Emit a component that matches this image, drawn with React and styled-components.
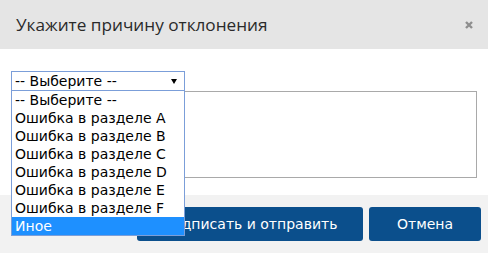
import React from 'react'
import styled, { createGlobalStyle } from 'styled-components';

const GlobalStyle = createGlobalStyle`
    body {
        margin: 0;
        background: #ffffff;
    }
`

const Modal = styled.div`
    width: 488px;
    height: 253px;
    overflow: hidden;
    background: #ffffff;
`

const Header = styled.div`
    height: 49px;
    background: #e5e5e5;
    display: flex;
    align-items: center;
    justify-content: space-between;
    padding: 0 15px 0 16px;
    box-sizing: border-box;
`

const Title = styled.span`
    font-family: 'Open Sans', sans-serif;
    font-size: 17.2px;
    color: #2a2a2a;
`

const Close = styled.svg`
    width: 8px;
    height: 8px;
    color: #8e8e8e;
`

const Body = styled.div`
    padding: 22px 11px 17px;
`

const SelectWrap = styled.div`
    position: relative;
    width: 174px;
`

const SelectBox = styled.div`
    height: 20px;
    box-sizing: border-box;
    border: 1px solid #7b9ed9;
    display: flex;
    align-items: center;
    justify-content: space-between;
    padding: 0 7px 0 3px;
    font-family: 'DejaVu Sans', Verdana, sans-serif;
    font-size: 14px;
    color: #000;
    background: #fff;
`

const Arrow = styled.span`
    width: 0;
    height: 0;
    border-left: 3px solid transparent;
    border-right: 3px solid transparent;
    border-top: 5px solid #000;
`

const DropList = styled.ul`
    position: absolute;
    top: 100%;
    left: 0;
    width: 174px;
    box-sizing: border-box;
    margin: 0;
    padding: 0;
    list-style: none;
    border: 1px solid #7b9ed9;
    border-top: none;
    background: #fff;
    z-index: 2;
`

const Option = styled.li`
    height: 18px;
    line-height: 18px;
    padding-left: 3px;
    font-family: 'DejaVu Sans', Verdana, sans-serif;
    font-size: 14px;
    color: ${p => p.active ? '#fff' : '#000'};
    background: ${p => p.active ? '#1e90ff' : 'transparent'};
    white-space: nowrap;
`

const Comment = styled.textarea`
    display: block;
    width: 100%;
    height: 87px;
    box-sizing: border-box;
    border: 1px solid #a9a9a9;
    resize: none;
    margin: 0;
`

const Footer = styled.div`
    background: #f2f2f2;
    padding: 12px 7px 20px;
    display: flex;
    justify-content: flex-end;
    gap: 6px;
`

const Btn = styled.button`
    height: 34px;
    width: ${p => p.w}px;
    border: none;
    border-radius: 3px;
    background: #0b4f8c;
    color: #fff;
    font-family: 'DejaVu Sans', Verdana, sans-serif;
    font-size: 14px;
    padding: 0;
`

const options = [
    '-- Выберите --',
    'Ошибка в разделе A',
    'Ошибка в разделе B',
    'Ошибка в разделе C',
    'Ошибка в разделе D',
    'Ошибка в разделе E',
    'Ошибка в разделе F',
    'Иное',
]

export default function App() {
    return (
        <Modal>
            <GlobalStyle />
            <Header>
                <Title>Укажите причину отклонения</Title>
                <Close viewBox="0 0 8 8">
                    <path d="M1 1L7 7M7 1L1 7" stroke="currentColor" strokeWidth="2.4" />
                </Close>
            </Header>
            <Body>
                <SelectWrap>
                    <SelectBox>
                        <span>-- Выберите --</span>
                        <Arrow />
                    </SelectBox>
                    <DropList>
                        {options.map(o => (
                            <Option key={o} active={o === 'Иное'}>{o}</Option>
                        ))}
                    </DropList>
                </SelectWrap>
                <Comment />
            </Body>
            <Footer>
                <Btn w={226}>Подписать и отправить</Btn>
                <Btn w={112}>Отмена</Btn>
            </Footer>
        </Modal>
    )
}
